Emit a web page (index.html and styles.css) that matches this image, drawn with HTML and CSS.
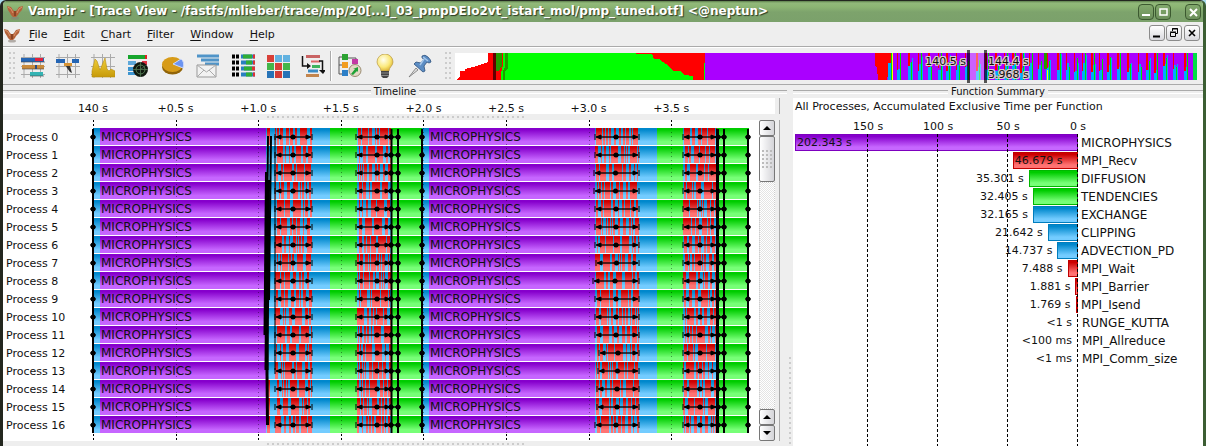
FILE: index.html
```html
<!DOCTYPE html>
<html lang="en">
<head>
<meta charset="utf-8">
<title>Vampir - Trace View</title>
<link rel="stylesheet" href="styles.css">
</head>
<body>
<svg class="defs" width="0" height="0" aria-hidden="true">
  <defs>
    <linearGradient id="purple" x1="0" y1="0" x2="0" y2="1"><stop offset=".1" stop-color="#8600cc"/><stop offset=".8" stop-color="#c666ff"/></linearGradient>
    <linearGradient id="blue" x1="0" y1="0" x2="0" y2="1"><stop offset=".1" stop-color="#0088cc"/><stop offset=".8" stop-color="#73ccff"/></linearGradient>
    <linearGradient id="green" x1="0" y1="0" x2="0" y2="1"><stop offset=".1" stop-color="#00cc00"/><stop offset=".8" stop-color="#77ff77"/></linearGradient>
    <linearGradient id="red" x1="0" y1="0" x2="0" y2="1"><stop offset=".1" stop-color="#cc0000"/><stop offset=".8" stop-color="#ff7373"/></linearGradient>
    <linearGradient id="gold" x1="0" y1="0" x2="0" y2="1"><stop offset="0" stop-color="#f0cf3a"/><stop offset="1" stop-color="#c79a08"/></linearGradient>
    <radialGradient id="bulb" cx=".4" cy=".35" r=".7"><stop offset="0" stop-color="#fffff0"/><stop offset=".6" stop-color="#fbe97a"/><stop offset="1" stop-color="#d9ae2c"/></radialGradient>
    <symbol id="logo" viewBox="0 0 16 16">
      <ellipse cx="8" cy="14" rx="4" ry="1.5" fill="#8a8178" opacity=".6"/>
      <path d="M0 2l4 1 2 3 1 1h2l1-1 2-3 4-1-1 4-3 3-1 2-2 2H6l-2-2-1-2-2-3z" fill="#b5623a"/>
      <path d="M1 3l3 2 2 4M15 3l-3 2-2 4" stroke="#d8946c" fill="none"/>
      <path d="M8 7v5" stroke="#8a4424" stroke-width="2"/>
    </symbol>
    <symbol id="mesh" viewBox="0 0 24 24"><path d="M3 0v24M11.500 0v24M19.500 0v24M0 3.500h24M0 12.500h24M0 20.500h24" stroke="#aaa" fill="none" stroke-width="1"/></symbol>
  </defs>
</svg>

<div class="window">
  <header class="titlebar">
    <svg class="logo"><use href="#logo"/></svg>
    <h1>Vampir - [Trace View - /fastfs/mlieber/trace/mp/20[...]_03_pmpDEIo2vt_istart_mol/pmp_tuned.otf] &lt;@neptun&gt;</h1>
    <div class="wm-buttons">
      <button aria-label="Minimize"><svg viewBox="0 0 14 14"><path d="M3 10h8" stroke="#fff" stroke-width="2"/></svg></button>
      <button aria-label="Maximize"><svg viewBox="0 0 14 14"><path d="M4 4h7v6H4z" fill="none" stroke="#fff" stroke-width="1.500"/></svg></button>
      <button class="close" aria-label="Close"><svg viewBox="0 0 14 14"><path d="M4 4l7 7M11 4l-7 7" stroke="#fff" stroke-width="2"/></svg></button>
    </div>
  </header>

  <nav class="menubar">
    <svg class="logo"><use href="#logo"/></svg>
    <button><u>F</u>ile</button><button><u>E</u>dit</button><button><u>C</u>hart</button><button><u>F</u>ilter</button><button><u>W</u>indow</button><button><u>H</u>elp</button>
    <div class="mdi-buttons">
      <button aria-label="Minimize view"><svg viewBox="0 0 14 14"><path d="M3 10.500h7" stroke="#000" stroke-width="2"/></svg></button>
      <button aria-label="Restore view"><svg viewBox="0 0 14 14"><path d="M5.500 5V2.500h5v5H8M3.500 6.500h5v4h-5zM5 3h6M3 6h6" fill="none" stroke="#000"/></svg></button>
      <button class="close" aria-label="Close view"><svg viewBox="0 0 14 14"><path d="M4 4l6 6M10 4l-6 6" stroke="#000" stroke-width="1.600"/></svg></button>
    </div>
  </nav>

  <div class="toolbar">
    <span class="grip"></span>
    <button aria-label="Master timeline"><svg viewBox="0 0 24 24"><use href="#mesh"/><path d="M0 4h23v4H0z" fill="#2465b4"/><path d="M14 4h8v3h-8z" fill="#e3213c"/><path d="M1 11h22v4H1z" fill="#c98a3c"/><path d="M9 18h13v4H9z" fill="#35b5b5"/><path d="M0 8h24M1 15h22M9 22h14" stroke="#444" opacity=".6"/><path d="M15 11v4" stroke="#2c4a80" stroke-width="2"/></svg></button>
    <button aria-label="Process timeline"><svg viewBox="0 0 24 24"><use href="#mesh"/><path d="M0 5h9v4H0zM16 5h7v4h-7z" fill="#2465b4"/><path d="M8 9h8v3H8z" fill="#d69334"/><path d="M10 12h4l2 7-2-1-3-4z" fill="#333"/></svg></button>
    <button aria-label="Counter timeline"><svg viewBox="0 0 24 24"><use href="#mesh"/><path d="M1 17l3-12 2 2 3 9 5-12 2 11 2 2 2-2 4 2v6H1z" fill="url(#gold)" stroke="#b78d10" stroke-width=".6"/></svg></button>
    <button aria-label="Performance radar"><svg viewBox="0 0 24 24"><path d="M2 1h19v4H2z" fill="#16a52c"/><path d="M2 7h8v4H2z" fill="#5da8da"/><path d="M16 7h5v4h-5z" fill="#e03040"/><path d="M2 13h8v4H2zM2 18h8v3H2z" fill="#3d95d0"/><path d="M19 1h2v4h-2z" fill="#d22"/><circle cx="14.500" cy="15.500" r="7.500" fill="#10180f"/><circle cx="14.500" cy="15.500" r="4.500" fill="none" stroke="#548054"/><path d="M14.500 15.500l5-4M7 15.500h15M14.500 8v15" stroke="#527852" stroke-width=".8"/></svg></button>
    <button aria-label="Function summary"><svg viewBox="0 0 24 24"><ellipse cx="11.500" cy="13" rx="10.500" ry="7.500" fill="#916408"/><ellipse cx="11.500" cy="10.500" rx="10.500" ry="7.500" fill="#d79b18"/><path d="M12 10L20 5q4 3 2 9z" fill="#6c94f0" stroke="#cdd9fa"/></svg></button>
    <button aria-label="Message summary"><svg viewBox="0 0 24 24"><path d="M1 2h22M5 6h18M9 10h14" stroke="#4f94c8" stroke-width="3"/><path d="M1 11h19v12H1z" fill="#f2f2f2" stroke="#999"/><path d="M1 11l9.500 7 9.500-7M1 23l7-7M20 23l-7-7" fill="none" stroke="#aaa"/></svg></button>
    <button aria-label="Process summary"><svg viewBox="0 0 24 24"><path d="M1 2.500h7M1 8.500h7M1 14.500h7M1 20.500h7" stroke="#000" stroke-width="4" stroke-dasharray="3 1"/><path d="M10 2.500h14M10 8.500h14M10 14.500h14M10 20.500h14" stroke="#287fc0" stroke-width="4"/><path d="M12 2.500h9M15 8.500h6M13 14.500h8M15 20.500h6" stroke="#2fae35" stroke-width="4"/><path d="M22 2.500h2M22 8.500h2M21 14.500h3M22 20.500h2" stroke="#d33" stroke-width="4"/></svg></button>
    <button aria-label="Communication matrix"><svg viewBox="0 0 24 24"><path d="M1 1h7v7H1zM9 9h7v7H9z" fill="#d84038"/><path d="M9 1h7v7H9zM17 1h7v7h-7z" fill="#62b2e0"/><path d="M1 9h7v7H1zM17 9h7v7h-7z" fill="#43b649"/><path d="M1 17h7v7H1zM17 17h7v7h-7z" fill="#2773b7"/><path d="M9 17h7v7H9z" fill="#d33c38"/></svg></button>
    <button aria-label="Call tree"><svg viewBox="0 0 24 24"><path d="M5 2.500h14" stroke="#c96363" stroke-width="3"/><path d="M10 7.500h9" stroke="#d66" stroke-width="2"/><path d="M11 12.500h8" stroke="#3eb35d" stroke-width="3"/><path d="M7 17h10" stroke="#3a8bc5" stroke-width="3"/><path d="M5 21.500h13" stroke="#c3854e" stroke-width="3"/><path d="M1.500 2v10H6M18 7h3.500v10" fill="none" stroke="#111" stroke-width="1.500"/><path d="M6 9l4 3-4 3zM18 16h7l-3 4z" fill="#111"/></svg></button>
    <span class="separator"></span>
    <button aria-label="Context view"><svg viewBox="0 0 24 24"><path d="M6 3H1v17h5M1 11h5M10 4h8v4" fill="none" stroke="#555"/><path d="M4 0h6v6H4z" fill="#2ba332"/><path d="M4 8h6v6H4z" fill="#f29c1f"/><path d="M4 16h6v6H4z" fill="#2c7fc7"/><path d="M14 5h6v5h-6z" fill="#c33aa5"/><circle cx="17" cy="16.500" r="6" fill="#e3d9c5" stroke="#998a70"/><path d="M13 20l4-5h-2l5-2v5l-1-1-4 4z" fill="#1fa236"/></svg></button>
    <button aria-label="Hints"><svg viewBox="0 0 24 24"><path d="M12 0a8 8 0 0 1 8 8c0 4-4 5-4 9H8c0-4-4-5-4-9a8 8 0 0 1 8-8z" fill="url(#bulb)" stroke="#b79a4a" stroke-width=".7"/><path d="M8 17h8v5l-2 2h-4l-2-2z" fill="#444"/><path d="M8 19h8M8 21.500h8" stroke="#999" stroke-width=".8"/></svg></button>
    <button aria-label="Pin"><svg viewBox="0 0 24 24"><path d="M1 23l7-9 2 2z" fill="#ddd" stroke="#777" stroke-width=".8"/><path d="M14 2q3-2 6 1t3 5l-2 1-2-1-3 4 1 5-2 1-9-8 2-2 5 1 3-4-2-1z" fill="#5c8dc4" stroke="#2f527d" stroke-width=".8"/><path d="M16 5l-4 6M15 3l5 4" stroke="#a6c7ea" stroke-width="1.500"/></svg></button>
    <span class="grip"></span>
    <div class="overview">
      <svg class="overview-chart" id="overview" viewBox="0 0 742 27" preserveAspectRatio="none" shape-rendering="crispEdges"></svg>
      <div class="zoom-range"><span class="zoom-start">140.5 s</span><span class="zoom-end">144.4 s<br>3.968 s</span></div>
    </div>
  </div>

  <main class="charts">
    <section class="timeline">
      <h2>Timeline</h2>
      <div class="pane-row">
        <svg class="ruler" id="ruler"></svg>
        <span class="frame-edge"></span>
      </div>
      <div class="splitter-h"></div>
      <div class="pane-row">
        <div class="tracks">
          <ol class="processes" id="processes"></ol>
          <svg class="track-canvas" id="tracks"></svg>
        </div>
        <div class="scrollbar">
          <button aria-label="Scroll up"><svg viewBox="0 0 14 14"><path d="M3 9h8L7 5z"/></svg></button>
          <span class="thumb"></span>
          <span class="trough"></span>
          <button aria-label="Page up"><svg viewBox="0 0 14 14"><path d="M3 9h8L7 5z"/></svg></button>
          <button aria-label="Scroll down"><svg viewBox="0 0 14 14"><path d="M3 5h8L7 9z"/></svg></button>
        </div>
        <span class="frame-edge"></span>
      </div>
      <div class="splitter-h bottom"></div>
    </section>
    <div class="splitter-v"></div>
    <section class="summary">
      <h2>Function Summary</h2>
      <div class="summary-body">
        <p>All Processes, Accumulated Exclusive Time per Function</p>
        <div class="axis" id="axis"></div>
        <div class="bars" id="bars"></div>
      </div>
    </section>
  </main>
</div>
<script src="script.js"></script>
</body>
</html>
```

FILE: styles.css
```css
* { box-sizing: border-box; }

body {
  margin: 0;
  background: #a9dcf0;
  color: #111;
  font: 11px/16px "DejaVu Sans", sans-serif;
}

button {
  margin: 0;
  padding: 0;
  border: 0;
  background: none;
  color: inherit;
  font: inherit;
}

h1, h2, p, ol { margin: 0; padding: 0; }

.defs { position: absolute; }

.window {
  display: flex;
  flex-direction: column;
  min-height: 100vh;
  border: solid #23271f;
  border-width: 1px 3px 0;
  border-right-color: #3c5e33;
  border-radius: 6px 6px 0 0;
  background: #eee;
  overflow: hidden;
}

.titlebar {
  display: flex;
  align-items: center;
  gap: 5px;
  height: 21px;
  padding: 0 2px 0 4px;
  background: linear-gradient(#5d7f4c, #92b97a 2px, #8cb573 6px, #7da36c 11px, #7ba16b);
}

.titlebar h1 {
  flex: 1;
  overflow: hidden;
  color: #fff;
  font-size: 12px;
  line-height: 23px;
  text-shadow: 1px 1px 1px #2b3a22;
  white-space: nowrap;
}

.logo { width: 16px; height: 16px; }

.wm-buttons, .mdi-buttons { display: flex; gap: 1px; }

.wm-buttons button {
  width: 16px;
  height: 16px;
  border: 1px solid #3c5930;
  border-radius: 4px;
  background: linear-gradient(#82a96c, #6c8f5b);
}

.wm-buttons .close { margin-left: 13px; }

.wm-buttons svg, .mdi-buttons svg { display: block; width: 14px; height: 14px; }

.menubar {
  display: flex;
  align-items: center;
  gap: 16px;
  height: 25px;
  padding: 1px 3px 0 1px;
  border-bottom: 1px solid #aaa;
}

.menubar .logo { margin-right: -7px; }
.menubar u { text-underline-offset: 2px; }

.mdi-buttons { margin-left: auto; padding-bottom: 3px; }

.mdi-buttons button {
  width: 16px;
  height: 16px;
  border: 1px solid #8b8b8b;
  border-radius: 3px;
  background: linear-gradient(#fff, #d9d9de);
}

.mdi-buttons .close { margin-left: 1px; }

.toolbar {
  display: flex;
  align-items: center;
  height: 38px;
  padding: 0 6px 0 5px;
  border-top: 1px solid #fff;
  border-bottom: 1px solid #aaa;
}

.toolbar > button { flex: none; width: 35px; height: 24px; }
.toolbar > button svg { display: block; width: 24px; height: 24px; margin: 0 auto; }

.grip {
  flex: none;
  width: 7px;
  height: 30px;
  background: radial-gradient(circle at 2px 2px, #ccc 1px, transparent 1px) 0 0 / 4px 5px;
}

.toolbar .overview { margin-left: 4px; }
.toolbar button + .grip { margin-left: 7px; }

.separator { flex: none; width: 2px; height: 30px; border-left: 1px solid #aaa; border-right: 1px solid #fff; }

.overview { position: relative; flex: 1; height: 27px; }
.overview-chart { display: block; width: 100%; height: 27px; background: #fff; }

.zoom-range {
  position: absolute;
  top: -3px;
  bottom: -3px;
  left: 69%;
  width: 20px;
  border: solid rgba(0, 0, 0, .65);
  border-width: 0 3px;
  background: linear-gradient(rgba(255, 255, 255, .38), rgba(255, 255, 255, .38)) 0 3px / 100% 27px no-repeat;
}

.zoom-range span {
  position: absolute;
  top: 5px;
  line-height: 13px;
  white-space: nowrap;
  text-shadow: 1px 0 #dcc, -1px 0 #dcc, 0 1px #dcc, 0 -1px #dcc, 1px 1px #dcc, -1px -1px #dcc, 1px -1px #dcc, -1px 1px #dcc;
}

.zoom-start { right: 100%; margin-right: 4px; }
.zoom-end { left: 100%; margin-left: 4px; }

.charts { display: flex; flex: 1; }

.timeline { flex: 784; min-width: 0; }
.summary { display: flex; flex: 410; flex-direction: column; min-width: 0; }

h2 {
  display: flex;
  align-items: center;
  gap: 3px;
  height: 13px;
  font-size: 10px;
  font-weight: normal;
  line-height: 15px;
}

h2::before, h2::after {
  content: "";
  flex: 1;
  height: 2px;
  border-top: 1px solid #aaa;
  border-bottom: 1px solid #fff;
}

.pane-row { display: flex; }

.ruler { flex: 1; min-width: 0; height: 16px; background: #fff; overflow: visible; }

.frame-edge {
  flex: none;
  width: 2px;
  margin: 0 6px 0 4px;
  border-left: 1px solid #aaa;
}

.splitter-h {
  display: flex;
  justify-content: center;
  height: 6px;
}

.splitter-h::before {
  content: "";
  width: 33%;
  background: radial-gradient(circle at 2px 3px, #ccc 1px, transparent 1px) 0 0 / 5px 6px;
}

.splitter-h.bottom { height: 5px; }

.splitter-v {
  flex: none;
  width: 6px;
  margin-top: 271px;
  background: radial-gradient(circle at 3px 2px, #ccc 1px, transparent 1px) 0 0 / 6px 5px;
}

.tracks { display: flex; flex: 1; min-width: 0; background: #fff; }

.processes {
  flex: none;
  width: 83px;
  padding: 9px 0 0 3px;
  line-height: 18px;
  list-style: none;
}

.track-canvas { flex: 1; min-width: 0; height: 321px; }
.track-label { font-size: 12px; fill: #111; }

.scrollbar {
  display: flex;
  flex: none;
  flex-direction: column;
  width: 16px;
}

.scrollbar button, .thumb {
  height: 16px;
  border: 1px solid #777;
  border-radius: 2px;
  background: linear-gradient(90deg, #fff, #d4d4d8);
}

.scrollbar svg { display: block; width: 14px; height: 14px; }

.thumb { display: flex; height: 46px; align-items: center; justify-content: center; }

.thumb::before {
  content: "";
  width: 12px;
  height: 20px;
  background: radial-gradient(circle at 2px 2px, #bbb 1px, transparent 1px) 0 0 / 4px 4px;
}

.trough {
  flex: 1;
  border: 1px dotted #ccc;
  background: repeating-conic-gradient(#e4e4e4 0 25%, #fff 0 50%) 0 0 / 2px 2px;
}

.summary-body {
  display: flex;
  flex: 1;
  flex-direction: column;
  padding: 1px 0 0 2px;
  background: #fff;
}

.axis, .bars { position: relative; margin-right: 125px; }
.axis { height: 19px; }
.axis span { position: absolute; top: 4px; width: 60px; margin-right: -30px; text-align: center; }

.bars { flex: 1; }

.bar-row { display: flex; justify-content: flex-end; height: 18px; line-height: 18px; }

.bar { position: relative; flex: none; height: 17px; border: 1px solid; }
.bar span { position: absolute; top: -1px; white-space: nowrap; }
.value-in { left: 1px; }
.value-out { right: 100%; margin-right: 6px; }
.bar .name { left: 100%; margin-left: 4px; font-size: 12px; }
.bar.empty { border-color: transparent; border-width: 1px 0; }

.purple { border-color: #7d00bf; background: linear-gradient(#8600cc 10%, #c666ff 80%); }
.red { border-color: #c00000; background: linear-gradient(#cc0000 10%, #ff7373 80%); }
.green { border-color: #00b800; background: linear-gradient(#00cc00 10%, #77ff77 80%); }
.blue { border-color: #007dbd; background: linear-gradient(#0088cc 10%, #73ccff 80%); }

.gridline {
  position: absolute;
  top: 0;
  bottom: 0;
  width: 1px;
  background: repeating-linear-gradient(#000 0 3px, transparent 3px 5px);
}
```

FILE: script.js
```
const NS = "http://www.w3.org/2000/svg";

function add(parent, name, attrs, text) {
  const node = document.createElementNS(NS, name);
  for (const key in attrs) node.setAttribute(key, attrs[key]);
  if (text) node.textContent = text;
  parent.appendChild(node);
  return node;
}

let seed = 7;
function random() {
  seed = (seed * 16807) % 2147483647;
  return seed / 2147483647;
}
function between(a, b) { return a + Math.floor(random() * (b - a + 1)); }

/* Process names */
const ROWS = 17;
const list = document.getElementById("processes");
for (let i = 0; i < ROWS; i++) {
  const item = document.createElement("li");
  item.textContent = "Process " + i;
  list.appendChild(item);
}

/* Phases of one trace, in units of 1/165 s from the left edge */
const PHASES = [
  ["blue", 0, 7], ["purple", 7, 173], ["blue", 173, 182], ["mixed", 182, 219],
  ["blue", 219, 237], ["green", 237, 264], ["mixed", 264, 298], ["green", 298, 329],
  ["blue", 329, 336], ["purple", 336, 502], ["mixed", 502, 546],
  ["blue", 546, 564], ["green", 564, 590], ["mixed", 590, 624], ["green", 624, 656]
];
const SHIFT = [0, 0, -1, -1, 0, 0, 0, 1, -2, 0, 0, 0, 4, 3, 2, 2, 0];

function drawTimeline() {
  seed = 7;
  const ruler = document.getElementById("ruler");
  const svg = document.getElementById("tracks");
  ruler.replaceChildren();
  svg.replaceChildren();
  const left = 7;
  const scale = (svg.clientWidth - 17) / 656;
  const x = u => left + u * scale;

  ["140 s", "+0.5 s", "+1.0 s", "+1.5 s", "+2.0 s", "+2.5 s", "+3.0 s", "+3.5 s"].forEach((label, i) =>
    add(ruler, "text", { x: 83 + x(i * 82.6), y: 14, "text-anchor": "middle", fill: "#111" }, label));

  const rect = (a, b, y, color) => add(svg, "rect", {
    x: x(a), y, width: (b - a) * scale, height: 17, fill: `url(#${color})`, "shape-rendering": "crispEdges"
  });

  for (let row = 0; row < ROWS; row++) {
    const y = 8 + row * 18;
    for (const [kind, start, end] of PHASES) {
      if (kind !== "mixed") { rect(start, end, y, kind); continue; }
      rect(start, end, y, "blue");
      let at = start + between(0, 2);
      while (at < end) {
        const wide = random() < .25 ? between(5, 8) : between(1, 3);
        rect(at, Math.min(at + wide, end), y, "red");
        at += wide + (random() < .5 ? 1 : between(2, 3));
      }
    }
    if (row === 0 || row > 13) rect(174, 177, y, "red");
  }

  for (let i = 0; i < 8; i++) {
    const gx = Math.round(x(i * 82.6)) + .5;
    add(svg, "path", { d: `M${gx} 0V8M${gx} 314V321`, stroke: "#000", "stroke-dasharray": "2 2" });
    add(svg, "path", { d: `M${gx} 8V314`, stroke: "#000", "stroke-dasharray": "1 3", opacity: .4 });
  }

  const line = (u1, y1, u2, y2, width, opacity = 1) => add(svg, "path", {
    d: `M${x(u1)} ${y1}L${x(u2)} ${y2}`, stroke: "#000", "stroke-width": width, opacity
  });
  [[0, 2], [298.5, 2], [305, 2], [329, 2], [624.5, 3], [631, 2], [655, 2]].forEach(([u, w]) => line(u, 9, u, 313, w));
  line(182, 16, 182, 250, 1);
  line(175, 16, 173, 215, 2);
  line(178, 16, 176, 180, 2);
  line(173, 52, 171.5, 215, 2);
  line(175, 60, 173.5, 250, 4);
  line(173.5, 200, 174.5, 305, 3);

  const dot = (u, y) => {
    add(svg, "circle", { cx: x(u), cy: y, r: 2.5 });
    add(svg, "path", { d: `M${x(u) - 3} ${y}h6`, stroke: "#000" });
  };
  const arrow = (u, y, dir) => add(svg, "path", {
    d: `M${x(u) - 3 * dir} ${y - 2}v4L${x(u) + 2 * dir} ${y}zM${x(u) + 3 * dir} ${y - 3}v6`, stroke: "#000", "stroke-width": 1
  });

  for (let row = 0; row < ROWS; row++) {
    const y = 17 + row * 18;
    const s = SHIFT[row];
    [[184, 217], [264, 305], [504 + s, 544], [592, 631]].forEach(([a, b]) => line(a, y, b, y, 2, .65));
    [0, 200, 284, 298, 305, 329, 523 + s / 2, 607, 625, 631, 655].forEach(u => dot(u, y));
    [185, 266, 505 + s, 593].forEach(u => arrow(u, y, -1));
    [216, 295, 543, 621].forEach(u => arrow(u, y, 1));
    [8, 337].forEach(u => add(svg, "text", { x: x(u), y: y + 4, class: "track-label" }, "MICROPHYSICS"));
  }
}
drawTimeline();
window.addEventListener("resize", drawTimeline);

/* Whole-trace overview */
(function () {
  const svg = document.getElementById("overview");
  const box = (x, y, w, h, fill) => add(svg, "rect", { x, y, width: w, height: h, fill });
  const shape = (d, fill) => add(svg, "path", { d, fill });
  shape("M1 27L5 24V18H10V16L18 14L31 10L33 8V0H60V27z", "#f00");
  box(38, 0, 3, 27, "#600000");
  shape("M41 0H47V13L44 18H41z", "#239a00");
  shape("M46 27V20L48 12V0H250V27z", "#0f0");
  shape("M48 27V18L50 14V0H53V15L50 18V27z", "#239a00");
  shape("M181 0H250V27H238V23L230 22L225 18H218L211 11L204 6H199L197 1H181z", "#f00");
  box(250, 0, 492, 27, "#a0f");
  box(249, 10, 1, 17, "#0f0");
  shape("M420 0H437V16L434 15L432 27H423L422 15L420 12z", "#f00");
  for (let x = 433; x < 735;) {
    const cut = between(10, 18);
    const red = x < 437 ? 0 : between(1, 2);
    box(x, cut, 3, 27 - cut, "#00a8ff");
    if (red) box(x, 0, red, between(12, 20), "#f00");
    box(x + 3, random() < .5 ? 0 : between(4, 14), 1, 27, "#00e000");
    if (random() < .4) box(x + 4, between(0, 12), 1, 27, "#00a8ff");
    x += between(8, 11);
  }
  box(437, 0, 1, 27, "#ff0");
  box(592, 17, 1, 10, "#ff0");
  box(589, 0, 3, 16, "#239a00");
  box(738, 0, 4, 27, "#0d4");
})();

/* Function summary */
(function () {
  const MAX = 202.343;
  const data = [
    ["MICROPHYSICS", 202.343, "202.343 s", "purple"],
    ["MPI_Recv", 46.679, "46.679 s", "red"],
    ["DIFFUSION", 35.301, "35.301 s", "green"],
    ["TENDENCIES", 32.405, "32.405 s", "green"],
    ["EXCHANGE", 32.165, "32.165 s", "blue"],
    ["CLIPPING", 21.642, "21.642 s", "blue"],
    ["ADVECTION_PD", 14.737, "14.737 s", "blue"],
    ["MPI_Wait", 7.488, "7.488 s", "red"],
    ["MPI_Barrier", 1.881, "1.881 s", "red"],
    ["MPI_Isend", 1.769, "1.769 s", "red"],
    ["RUNGE_KUTTA", 0, "<1 s", "green"],
    ["MPI_Allreduce", 0, "<100 ms", "red"],
    ["MPI_Comm_size", 0, "<1 ms", "red"]
  ];
  const bars = document.getElementById("bars");
  const axis = document.getElementById("axis");
  const span = (parent, className, text) => {
    const node = document.createElement("span");
    node.className = className;
    node.textContent = text;
    parent.appendChild(node);
    return node;
  };
  for (const [name, value, text, color] of data) {
    const row = document.createElement("div");
    row.className = "bar-row";
    const bar = document.createElement("div");
    bar.className = "bar " + color + (value ? "" : " empty");
    bar.style.width = value / MAX * 100 + "%";
    span(bar, value > 40 ? "value-in" : "value-out", text);
    span(bar, "name", name);
    row.appendChild(bar);
    bars.appendChild(row);
  }
  for (const tick of [150, 100, 50, 0]) {
    const right = tick / MAX * 100 + "%";
    span(bars, "gridline", "").style.right = right;
    span(axis, "tick", tick + " s").style.right = right;
  }
})();
```
